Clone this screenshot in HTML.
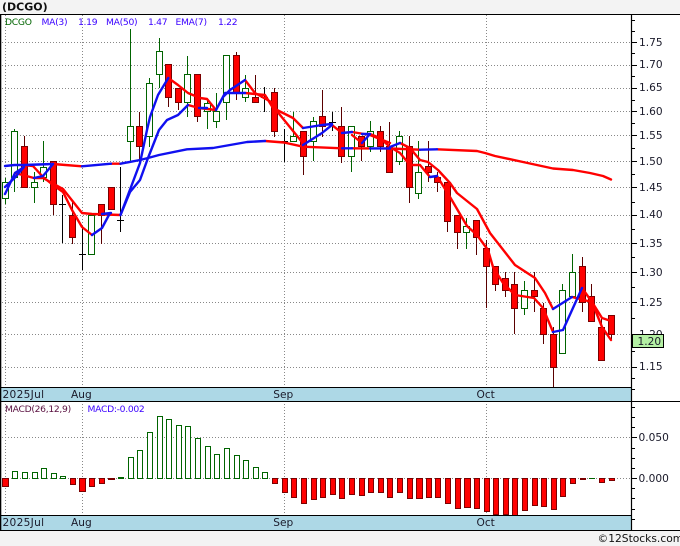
<!DOCTYPE html>
<html><head><meta charset="utf-8">
<style>
html,body{margin:0;padding:0;background:#f3f3f3;width:680px;height:546px;overflow:hidden}
svg{display:block}
text{font-family:"DejaVu Sans",sans-serif;font-size:10.6px;fill:#1a1a2a}
.l{font-size:9.2px;letter-spacing:-.3px}
.m{font-size:10.6px}
</style></head><body>
<svg width="680" height="546" viewBox="0 0 680 546" xmlns="http://www.w3.org/2000/svg">
<rect width="680" height="546" fill="#f3f3f3"/>
<rect x="0" y="14" width="680" height="516" fill="#fff"/>
<rect x="1" y="388" width="631" height="13" fill="#add8e6"/>
<rect x="1" y="516" width="631" height="14" fill="#add8e6"/>
<text x="2" y="10.5" style="font-weight:bold;font-size:11px;fill:#111">(DCGO)</text>
<!-- grid -->
<g stroke="#888" stroke-width="1" stroke-dasharray="1 2" fill="none">
<path d="M2 42.5H632M2 65.5H632M2 88.5H632M2 111.5H632M2 135.5H632M2 161.5H632M2 187.5H632M2 215.5H632M2 243.5H632M2 272.5H632M2 302.5H632M2 334.5H632M2 367.5H632"/>
<path d="M2 437.5H632M2 478.5H632"/>
<path d="M5.5 15V388M82.5 15V388M284.5 15V388M486.5 15V388M5.5 401V516M82.5 401V516M284.5 401V516M486.5 401V516"/>
</g>
<!-- wicks -->
<g fill="none" stroke-width="1">
<path stroke="#5a0000" d="M24.5 136V187M53.5 161V215M72.5 202V244M101.5 204V244M111.5 187V209M139.5 112V162M168.5 64V107M178.5 88V110M197.5 74V122M236.5 52V100M255.5 75V102M274.5 88V137M303.5 131V175M322.5 90V137M341.5 107V163M361.5 136V161M380.5 126V152M389.5 122V172M409.5 136V203M428.5 141V182M437.5 172V192M447.5 182V232M457.5 215V249M476.5 220V255M486.5 240V308M495.5 266V291M505.5 272V297M514.5 272V334M534.5 272V312M543.5 303V344M553.5 327V387M582.5 257V312M591.5 284V321M601.5 318V360M611.5 315V340"/>
<path stroke="#006400" d="M5.5 178V204M14.5 129V192M34.5 172V203M43.5 141V182M130.5 29V162M149.5 78V147M159.5 38V88M187.5 56V117M207.5 100V129M216.5 93V128M226.5 55V120M245.5 75V102M293.5 112V141M313.5 117V161M351.5 126V172M370.5 121V152M399.5 131V165M418.5 141V199M466.5 218V249M524.5 281V315M562.5 284V353M572.5 254V296"/>
<path stroke="#000" d="M62.5 195V243M59 204.5H66M82.5 226V270M79 254.5H86M120.5 167V232M117 220.5H124M264.5 87V112M261 97.5H268M284.5 129V162M281 141.5H288M332.5 112V131M329 122.5H336"/>
</g>
<!-- green bodies -->
<g fill="#fff" stroke="#006400" stroke-width="1">
<rect x="2.5" y="182.5" width="6" height="16"/>
<rect x="11.5" y="131.5" width="6" height="46"/>
<rect x="31.5" y="182.5" width="6" height="5"/>
<rect x="40.5" y="167.5" width="6" height="10"/>
<rect x="88.5" y="215.5" width="6" height="39"/>
<rect x="127.5" y="126.5" width="6" height="15"/>
<rect x="146.5" y="83.5" width="6" height="53"/>
<rect x="156.5" y="51.5" width="6" height="23"/>
<rect x="184.5" y="74.5" width="6" height="28"/>
<rect x="204.5" y="103.5" width="6" height="8"/>
<rect x="213.5" y="111.5" width="6" height="10"/>
<rect x="223.5" y="55.5" width="6" height="47"/>
<rect x="242.5" y="88.5" width="6" height="9"/>
<rect x="290.5" y="136.5" width="6" height="5"/>
<rect x="310.5" y="121.5" width="6" height="20"/>
<rect x="348.5" y="126.5" width="6" height="30"/>
<rect x="367.5" y="131.5" width="6" height="15"/>
<rect x="396.5" y="136.5" width="6" height="25"/>
<rect x="415.5" y="172.5" width="6" height="21"/>
<rect x="463.5" y="226.5" width="6" height="6"/>
<rect x="521.5" y="290.5" width="6" height="18"/>
<rect x="559.5" y="290.5" width="6" height="63"/>
<rect x="569.5" y="272.5" width="6" height="24"/>
</g>
<!-- red bodies -->
<g fill="#f00" stroke="#7a0000" stroke-width="1">
<rect x="21.5" y="146.5" width="6" height="41"/>
<rect x="50.5" y="161.5" width="6" height="43"/>
<rect x="69.5" y="215.5" width="6" height="22"/>
<rect x="98.5" y="204.5" width="6" height="11"/>
<rect x="108.5" y="187.5" width="6" height="22"/>
<rect x="136.5" y="126.5" width="6" height="20"/>
<rect x="165.5" y="64.5" width="6" height="33"/>
<rect x="175.5" y="88.5" width="6" height="14"/>
<rect x="194.5" y="74.5" width="6" height="42"/>
<rect x="233.5" y="55.5" width="6" height="37"/>
<rect x="252.5" y="97.5" width="6" height="5"/>
<rect x="271.5" y="92.5" width="6" height="39"/>
<rect x="300.5" y="131.5" width="6" height="25"/>
<rect x="319.5" y="116.5" width="6" height="10"/>
<rect x="338.5" y="126.5" width="6" height="30"/>
<rect x="358.5" y="136.5" width="6" height="10"/>
<rect x="377.5" y="131.5" width="6" height="15"/>
<rect x="386.5" y="146.5" width="6" height="26"/>
<rect x="406.5" y="146.5" width="6" height="41"/>
<rect x="425.5" y="166.5" width="6" height="6"/>
<rect x="434.5" y="177.5" width="6" height="5"/>
<rect x="444.5" y="182.5" width="6" height="39"/>
<rect x="454.5" y="215.5" width="6" height="17"/>
<rect x="473.5" y="220.5" width="6" height="17"/>
<rect x="483.5" y="248.5" width="6" height="18"/>
<rect x="492.5" y="266.5" width="6" height="18"/>
<rect x="502.5" y="278.5" width="6" height="12"/>
<rect x="511.5" y="284.5" width="6" height="24"/>
<rect x="531.5" y="290.5" width="6" height="6"/>
<rect x="540.5" y="308.5" width="6" height="26"/>
<rect x="550.5" y="334.5" width="6" height="33"/>
<rect x="579.5" y="266.5" width="6" height="36"/>
<rect x="588.5" y="296.5" width="6" height="25"/>
<rect x="598.5" y="327.5" width="6" height="33"/>
<rect x="608.5" y="315.5" width="6" height="19"/>
</g>
<!-- lines -->
<g fill="none" stroke-width="2.4" stroke-linejoin="round" stroke-linecap="round">
<path stroke="#f00" d="M53 164L82 166.3M111 163.7L120.5 163.7M265 141L284 142.5L303 146.7L342 148.3M352 148.3L370 148.4M390 148.5L420 149.7M437 149.3L477 151L485 153L495 156L523 162L553 168.5L573 170L590 173L603 176L611 179.5"/>
<path stroke="#f00" d="M15 173L34 178L43 178L63 189L82 213L92 214L120.5 215"/>
<path stroke="#f00" d="M24 165L33 166L43 177L53 185L63 192L72 210L82 227L92 235"/>
<path stroke="#f00" d="M168.3 78L178 85L188 93L200 98L207 99L216 110"/>
<path stroke="#f00" d="M188 105L199 108L216 110"/>
<path stroke="#f00" d="M245 80L255 93L273 103L276 110L302 142"/>
<path stroke="#f00" d="M245 93L265 95L273 108L283 113L293 118L303 128"/>
<path stroke="#f00" d="M332 125L342 133M342 133L342 148M352 132L370 135L390 143M352 135L362 143M370 134L380 138L390 147L400 153L410 165L420 165L430 177"/>
<path stroke="#f00" d="M400 143L410 148L420 160L428 162L438 170L450 183L457 193L477 209L490 233L515 265L535 278L545 293L553 309"/>
<path stroke="#f00" d="M437 176L450 197L467 226L477 235L488 250L493 267L503 283L515 295L534 298L543 308L553 332"/>
<path stroke="#f00" d="M572 297L592 302L602 318L611 321"/>
<path stroke="#f00" d="M582 288L592 302L602 327L611 340"/>
<path stroke="#1010f0" d="M5 166L14.5 165L24 165L53 164M82 166.3L111 163.7M120.5 163.7L140 160L148 158L159 155L187 149.3L213 148L230 145L247 142L265 141M342 148.3L352 148.3M370 148.4L390 148.5M420 149.7L437 149.3"/>
<path stroke="#1010f0" d="M5 194L15 173L24 167M5 187L14.5 178L24 167M34 178L43 176L53 164"/>
<path stroke="#1010f0" d="M92 235L102 228L110 213M102 214L111 213"/>
<path stroke="#1010f0" d="M120.5 215L130 192L140 180L148 158L159 130L167 120L178 115L188 105"/>
<path stroke="#1010f0" d="M120.5 215L140 163L147 130L150 117L158 95L168.3 78"/>
<path stroke="#1010f0" d="M199 108L207 108M216 110L223 97L230 90L245 80M216 110L225 93L245 93"/>
<path stroke="#1010f0" d="M303 128L322 125L332 124M303 145L322 133L332 125M342 133L352 132M362 143L370 134M362 134L370 134M390 147L400 143M430 177L437 176"/>
<path stroke="#1010f0" d="M553 309L572 297M553 332L563 330L582 288"/>
</g>
<!-- macd bars -->
<g fill="#fff" stroke="#006400" stroke-width="1">
<path d="M12.5 471.5h5v7h-5zM22.5 472.5h5v6h-5zM32.5 472.5h5v6h-5zM41.5 468.5h5v10h-5zM51.5 473.5h5v5h-5zM60.5 476.5h5v2h-5zM118.5 477.5h5v1h-5z"/>
<path d="M128.5 457.5h5v21h-5zM137.5 450.5h5v28h-5zM147.5 432.5h5v46h-5zM157.5 416.5h5v62h-5zM166.5 419.5h5v59h-5zM176.5 425.5h5v53h-5zM185.5 426.5h5v52h-5zM195.5 438.5h5v40h-5zM205.5 446.5h5v32h-5zM214.5 454.5h5v24h-5zM224.5 448.5h5v30h-5zM234.5 455.5h5v23h-5zM243.5 460.5h5v18h-5zM253.5 467.5h5v11h-5zM262.5 472.5h5v6h-5z"/>
<path stroke-width="1" d="M589 478.5h6"/>
</g>
<g fill="#f00" stroke="#7a0000" stroke-width="1">
<path d="M2.5 478.5h6v8h-6zM70.5 478.5h5v6h-5zM79.5 478.5h6v13h-6zM89.5 478.5h5v8h-5zM99.5 478.5h5v5h-5zM108.5 478.5h6v1h-6z"/>
<path d="M272.5 478.5h5v5h-5zM282.5 478.5h5v14h-5zM291.5 478.5h5v19h-5zM301.5 478.5h5v25h-5zM311.5 478.5h5v21h-5zM320.5 478.5h5v19h-5zM330.5 478.5h5v16h-5zM339.5 478.5h5v20h-5zM349.5 478.5h5v16h-5zM359.5 478.5h5v17h-5zM368.5 478.5h5v14h-5zM378.5 478.5h5v14h-5zM387.5 478.5h5v19h-5zM397.5 478.5h5v14h-5zM407.5 478.5h5v20h-5zM416.5 478.5h6v20h-6zM426.5 478.5h5v19h-5zM435.5 478.5h5v19h-5zM445.5 478.5h5v25h-5zM455.5 478.5h5v30h-5zM464.5 478.5h6v29h-6zM474.5 478.5h5v30h-5zM484.5 478.5h5v33h-5zM493.5 478.5h5v36h-5zM503.5 478.5h5v36h-5zM512.5 478.5h5v37h-5zM522.5 478.5h5v32h-5zM532.5 478.5h5v27h-5zM541.5 478.5h5v28h-5zM551.5 478.5h5v31h-5zM560.5 478.5h5v18h-5zM570.5 478.5h5v5h-5zM580.5 478.5h5v1h-5zM599.5 478.5h5v4h-5zM609.5 478.5h5v2h-5z"/>
</g>
<!-- frame -->
<g fill="none" stroke="#000" stroke-width="1">
<path d="M0 14.5H680M0 387.5H632M0 401.5H680M0 515.5H632M0 530.5H680"/>
<path d="M631.5 14V530" stroke-width="1.2"/>
<path d="M0.5 14V530" stroke-width="1.6"/>
<path d="M632 20.5h3M632 31.5h3M632 42.5h5M632 53.5h3M632 65.5h5M632 76.5h3M632 88.5h5M632 100.5h3M632 111.5h5M632 123.5h3M632 135.5h5M632 148.5h3M632 161.5h5M632 174.5h3M632 187.5h5M632 202.5h3M632 215.5h5M632 229.5h3M632 243.5h5M632 257.5h3M632 272.5h5M632 287.5h3M632 302.5h5M632 318.5h3M632 334.5h5M632 351.5h3M632 367.5h5M632 378.5h3M632 389.5h3"/>
<path d="M632 407.5h3M632 417.5h3M632 427.5h3M632 437.5h5M632 448.5h3M632 458.5h3M632 468.5h3M632 478.5h5M632 488.5h3M632 498.5h3M632 509.5h3M632 519.5h3"/>
</g>
<!-- legend -->
<text class="l" x="5" y="25" style="fill:#006400">DCGO</text>
<text class="l" x="41.5" y="25" style="fill:#3a00ff">MA(3)</text>
<text class="l" x="78" y="25" style="fill:#3a00ff">1.19</text>
<text class="l" x="106" y="25" style="fill:#3a00ff">MA(50)</text>
<text class="l" x="148" y="25" style="fill:#3a00ff">1.47</text>
<text class="l" x="175.5" y="25" style="fill:#3a00ff">EMA(7)</text>
<text class="l" x="218" y="25" style="fill:#3a00ff">1.22</text>
<text class="l" x="5" y="412" style="fill:#5a1040">MACD(26,12,9)</text>
<text class="l" x="87.5" y="412" style="fill:#3a00ff">MACD:-0.002</text>
<!-- axis labels -->
<text x="639" y="46">1.75</text>
<text x="639" y="68">1.70</text>
<text x="639" y="91">1.65</text>
<text x="639" y="115">1.60</text>
<text x="639" y="139">1.55</text>
<text x="639" y="165">1.50</text>
<text x="639" y="191">1.45</text>
<text x="639" y="218">1.40</text>
<text x="639" y="247">1.35</text>
<text x="639" y="276">1.30</text>
<text x="639" y="306">1.25</text>
<text x="639" y="338">1.20</text>
<text x="639" y="370">1.15</text>
<rect x="632.5" y="334.5" width="31" height="13" fill="#b4f0a4" stroke="#000"/>
<text x="637.5" y="345">1.20</text>
<text x="638.5" y="441">0.050</text>
<text x="638.5" y="482">0.000</text>
<!-- dates -->
<text class="m" x="2.5" y="398" style="letter-spacing:.3px">2025Jul</text>
<text class="m" x="71" y="398">Aug</text>
<text class="m" x="273.3" y="398">Sep</text>
<text class="m" x="476.5" y="398">Oct</text>
<text class="m" x="2.5" y="526" style="letter-spacing:.3px">2025Jul</text>
<text class="m" x="71" y="526">Aug</text>
<text class="m" x="273.3" y="526">Sep</text>
<text class="m" x="476.5" y="526">Oct</text>
<text x="597.5" y="542" style="font-size:10.7px;fill:#111">©12Stocks.com</text>
</svg>
</body></html>
